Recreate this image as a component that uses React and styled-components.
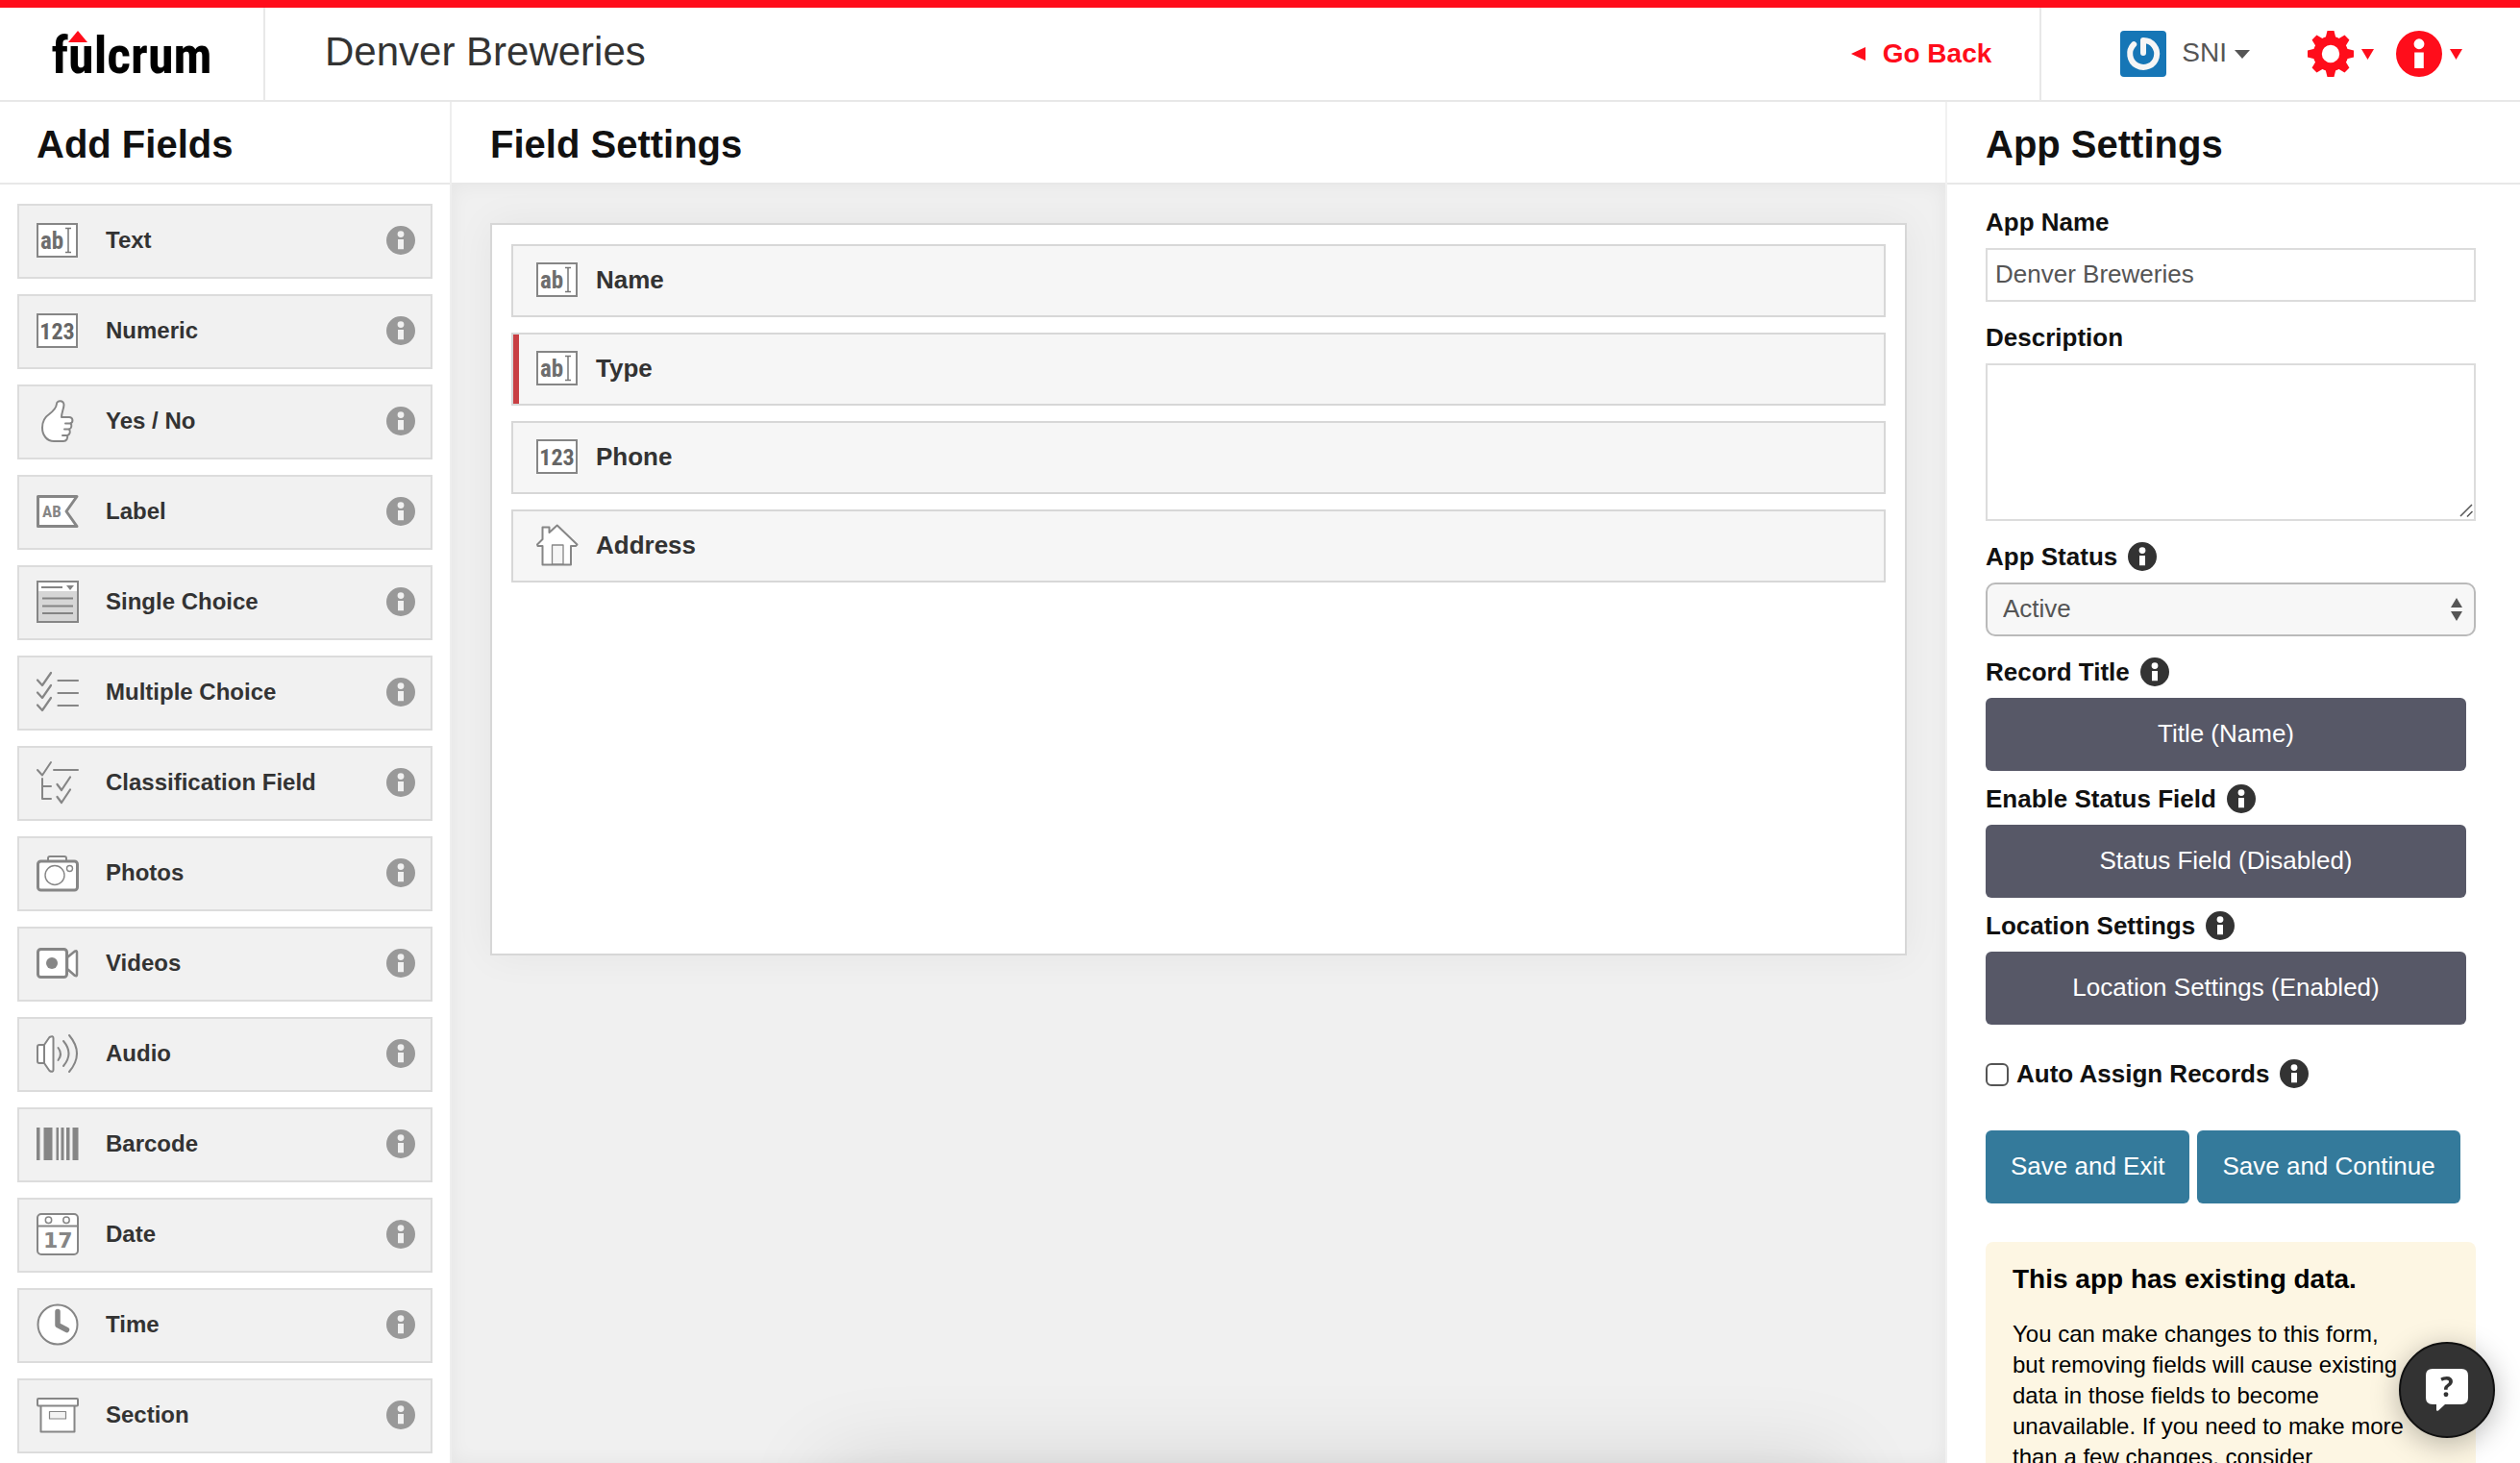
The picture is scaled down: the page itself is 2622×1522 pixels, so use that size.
import React, { useState } from "react";
import styled, { createGlobalStyle } from "styled-components";

const RED = "#ff0d1b";
const LINE = "#e8e8e8";
const ICON = "#868686";
const CONDENSED = '"Roboto Condensed", "Open Sans Condensed", "Noto Sans Condensed", "Liberation Sans Narrow", "Liberation Sans"';

const GlobalStyle = createGlobalStyle`
  *, *::before, *::after { box-sizing: border-box; }
  body {
    margin: 0;
    background: #fff;
    color: #111;
    font-family: "Helvetica Neue", "Liberation Sans", Arial, sans-serif;
    font-size: 26px;
  }
  button, input, select, textarea { font: inherit; }
  button { cursor: pointer; }
  h1, h2, h3, p, ul { margin: 0; padding: 0; }
  ul { list-style: none; }
`;

/* ---------- page frame ---------- */

const Page = styled.div`
  display: flex;
  flex-direction: column;
  height: 100vh;
  overflow: hidden;
`;

const Header = styled.header`
  display: flex;
  flex: none;
  height: 106px;
  border-top: 8px solid ${RED};
  border-bottom: 2px solid ${LINE};
`;

const LogoLink = styled.a`
  display: flex;
  align-items: center;
  justify-content: center;
  width: 276px;
  padding-top: 4px;
  border-right: 2px solid ${LINE};
  color: #000;
  text-decoration: none;
`;

const Wordmark = styled.span`
  position: relative;
  font-family: ${CONDENSED}, sans-serif;
  font-size: 54px;
  font-weight: 700;
  line-height: 60px;
`;

const Fulcrum = styled.svg`
  position: absolute;
  top: 4px;
  left: 18px;
  width: 20px;
  height: 12px;
`;

const PageTitle = styled.h1`
  flex: 1;
  padding: 0 62px 4px;
  align-self: center;
  color: #333;
  font-size: 42px;
  font-weight: 400;
  line-height: 48px;
`;

const BackLink = styled.a`
  display: flex;
  align-items: center;
  gap: 18px;
  padding-right: 50px;
  border-right: 2px solid ${LINE};
  color: ${RED};
  font-size: 28px;
  font-weight: 700;
  text-decoration: none;
`;

const UserNav = styled.nav`
  display: flex;
  align-items: center;
  padding: 0 60px 0 82px;
`;

const NavButton = styled.button`
  display: flex;
  align-items: center;
  gap: 8px;
  padding: 0;
  margin-left: ${(p) => p.$before || 0}px;
  border: 0;
  background: none;
  color: ${(p) => p.$color || RED};
  font-size: 28px;
`;

const UserName = styled.span`
  padding: 0 0 2px 8px;
`;

const Columns = styled.div`
  display: flex;
  flex: 1;
  min-height: 0;
`;

const Column = styled.section`
  display: flex;
  flex-direction: column;
  flex: none;
  width: ${(p) => p.$width};
  min-height: 0;
`;

const Palette = styled(Column)`
  border-right: 2px solid #eee;
`;

const Center = styled(Column)`
  flex: 1;
  min-width: 0;
`;

const Settings = styled(Column)`
  border-left: 2px solid #f1f1f1;
`;

const ColumnTitle = styled.h2`
  flex: none;
  height: 86px;
  padding: 2px ${(p) => p.$inset || 40}px 0;
  border-bottom: 2px solid ${LINE};
  font-size: 40px;
  line-height: 84px;
`;

/* ---------- field palette ---------- */

const PaletteList = styled.ul`
  display: flex;
  flex-direction: column;
  gap: 16px;
  min-height: 0;
  padding: 20px 18px;
`;

const PaletteItem = styled.li`
  display: flex;
  flex: none;
  height: 78px;
  padding: 0 16px 2px 0;
  border: 2px solid #dcdcdc;
  background: #f1f1f1;
`;

const AddButton = styled.button`
  display: flex;
  flex: 1;
  align-items: center;
  gap: 28px;
  padding: 0 0 0 18px;
  border: 0;
  background: none;
  color: #333;
  font-size: 24px;
  font-weight: 700;
  text-align: left;
`;

const HelpButton = styled.button`
  display: flex;
  align-items: center;
  padding: 0;
  border: 0;
  background: none;
  color: ${(p) => (p.$muted ? "#999" : "#333")};
`;

/* ---------- form canvas ---------- */

const Workspace = styled.div`
  position: relative;
  flex: 1;
  min-height: 0;
  padding: 40px;
  overflow: hidden;
  background: #f0f0f0;
  box-shadow: inset 0 0 20px rgba(0, 0, 0, 0.05);

  &::after {
    content: "";
    position: absolute;
    top: 100%;
    left: 25%;
    right: 7%;
    height: 100px;
    box-shadow: 0 0 90px rgba(0, 0, 0, 0.12);
  }
`;

const FormCard = styled.ul`
  display: flex;
  flex-direction: column;
  gap: 16px;
  min-height: 762px;
  padding: 20px;
  border: 2px solid #d7d7d7;
  background: #fff;
  box-shadow: 0 0 40px rgba(0, 0, 0, 0.05);
`;

const FormRow = styled.li`
  display: flex;
  align-items: center;
  gap: 18px;
  height: 76px;
  padding: 0 24px 2px;
  border: 2px solid #d7d7d7;
  background: #f6f6f6;
  box-shadow: ${(p) => (p.$required ? "inset 6px 0 0 #c83f43" : "none")};
  color: #333;
  font-weight: 700;
`;

/* ---------- app settings ---------- */

const SettingsForm = styled.form`
  padding: 24px 46px 0 40px;
`;

const Field = styled.div`
  margin-bottom: ${(p) => (p.$tight ? 14 : 22)}px;
`;

const LabelRow = styled.div`
  display: flex;
  align-items: center;
  gap: 11px;
  height: 30px;
  margin-bottom: 12px;
  font-weight: 700;
  line-height: 30px;
`;

const TextInput = styled.input`
  display: block;
  width: 100%;
  height: 56px;
  padding: 0 8px 2px;
  border: 2px solid #dcdcdc;
  border-radius: 0;
  background: #fff;
  color: #555;
`;

const ControlWrap = styled.div`
  position: relative;
`;

const TextArea = styled.textarea`
  display: block;
  width: 100%;
  height: 164px;
  padding: 8px;
  border: 2px solid #dcdcdc;
  color: #555;
  resize: none;
`;

const Grip = styled.svg`
  position: absolute;
  right: 3px;
  bottom: 4px;
  width: 14px;
  height: 14px;
  pointer-events: none;
`;

const Select = styled.select`
  display: block;
  width: 100%;
  height: 56px;
  padding: 0 44px 2px 16px;
  border: 2px solid #bababa;
  border-radius: 10px;
  background: #f7f7f7;
  color: #555;
  appearance: none;
`;

const SelectArrows = styled.svg`
  position: absolute;
  top: 16px;
  right: 14px;
  width: 12px;
  height: 24px;
  pointer-events: none;
`;

const Button = styled.button`
  height: 76px;
  padding: 0 26px 2px;
  border: 0;
  border-radius: 6px;
  background: #347a9b;
  color: #fff;
`;

const WideButton = styled(Button)`
  display: block;
  width: calc(100% - 10px);
  background: #575867;
`;

const CheckRow = styled.div`
  display: flex;
  align-items: center;
  height: 30px;
  margin: 36px 0 44px;
  font-weight: 700;
`;

const CheckBox = styled.input`
  width: 24px;
  height: 24px;
  margin: 2px 8px 0 0;
  border: 2px solid #555;
  border-radius: 6px;
  background: #fff;
  appearance: none;

  &:checked { background: #347a9b; }
`;

const CheckLabel = styled.label`
  margin-right: 11px;
`;

const Actions = styled.div`
  display: flex;
  gap: 8px;
  margin-bottom: 40px;
`;

const Notice = styled.aside`
  padding: 16px 70px 16px 28px;
  border-radius: 8px;
  background: #fdf6e3;
  color: #000;
`;

const NoticeTitle = styled.h3`
  margin-bottom: 18px;
  font-size: 28px;
  line-height: 46px;
`;

const NoticeText = styled.p`
  font-size: 24px;
  line-height: 32px;
`;

const ChatButton = styled.button`
  position: fixed;
  right: 26px;
  bottom: 26px;
  display: flex;
  align-items: center;
  justify-content: center;
  width: 100px;
  height: 100px;
  padding: 0;
  border: 2px solid #111;
  border-radius: 50%;
  background: #333;
  box-shadow: 0 6px 30px rgba(0, 0, 0, 0.28);
`;

/* ---------- drawings ---------- */

const IconSvg = styled.svg`
  display: block;
  flex: none;
  width: 44px;
  height: 44px;
  overflow: visible;
`;

const Glyphs = styled.text`
  font-family: ${(p) => p.$face || CONDENSED}, sans-serif;
  font-size: ${(p) => p.$size}px;
  font-weight: 700;
`;

const Box = () => <rect x="1" y="5" width="41" height="34" fill="#fff" stroke={ICON} strokeWidth="2" />;

const art = {
  text: (
    <>
      <Box />
      <Glyphs x="4" y="31" $size={25} fill="#6e6e6e">ab</Glyphs>
      <path d="M30 9.500h6M30 34.500h6M33 9.500v25" fill="none" stroke="#777" strokeWidth="1.500" />
    </>
  ),
  numeric: (
    <>
      <Box />
      <Glyphs x="21.500" y="31" textAnchor="middle" $size={24} fill="#666">123</Glyphs>
    </>
  ),
  yesno: (
    <g fill="#fff" stroke={ICON} strokeWidth="2" strokeLinejoin="round" strokeLinecap="round">
      <path d="M21 4C21 .5 28 0 28.500 5C28.500 9 26 13 26 18H34C38 18 38.500 23 35.500 24.500C37 26 36.500 30 34 30.500C35.500 33 35 36 32 37C33 40 31 43 28 43H18C11 43 6 37 6 29C6 21 10 17 13 15C17 12 20.500 9 21 4Z" />
      <path d="M30 24.500h5.500M29 30.500h5M27 37h5" />
    </g>
  ),
  label: (
    <>
      <path d="M1.500 6.500H42L31 22L42 37.500H1.500Z" fill="#fff" stroke={ICON} strokeWidth="3" strokeLinejoin="round" />
      <Glyphs x="6" y="28" $size={17} fill={ICON}>AB</Glyphs>
    </>
  ),
  single: (
    <>
      <rect x="1" y="1" width="42" height="42" fill="#d6d6d6" stroke={ICON} strokeWidth="2" />
      <path d="M2 2h40v9H2z" fill="#fff" />
      <path d="M5 7h22M6 18.500h32M6 26.500h32M6 34h32" stroke="#848484" strokeWidth="2" />
      <path d="M31 5h8l-4 5z" fill="#848484" />
    </>
  ),
  multiple: (
    <g fill="none" stroke={ICON} strokeWidth="2.200" strokeLinecap="round" strokeLinejoin="round">
      {[0, 13, 26].map((y) => (
        <path key={y} d={`M1 ${y + 9.5}L6 ${y + 15}L15 ${y + 2}M22.500 ${y + 10}H43`} />
      ))}
    </g>
  ),
  classification: (
    <g fill="none" stroke={ICON} strokeWidth="2.200" strokeLinecap="round" strokeLinejoin="round">
      <path d="M1 9L6 14.500L15 1M18 9H43M6 18V39H15M6 26H15" strokeWidth="2" />
      <path d="M21.500 24L26 30L35 16.500M21.500 37L26 43L35 29.500" />
    </g>
  ),
  photos: (
    <g fill="#fff" stroke={ICON} strokeWidth="2">
      <path d="M12 11V7q0-2 2-2h15q2 0 2 2v4" />
      <rect x="1.500" y="10" width="41" height="30" rx="3" strokeWidth="3" />
      <circle cx="19" cy="24.500" r="10" strokeWidth="1.400" />
      <circle cx="34.500" cy="17.500" r="3" strokeWidth="1.400" />
    </g>
  ),
  videos: (
    <g fill="#fff" stroke={ICON} strokeWidth="2.500" strokeLinejoin="round">
      <path d="M32 16L40 9.500q2-1 2 1V34q0 2-2 1L32 28Z" />
      <rect x="1.500" y="7.500" width="30" height="29" rx="3" strokeWidth="3" />
      <circle cx="16" cy="22" r="6" fill={ICON} stroke="none" />
    </g>
  ),
  audio: (
    <g fill="#fff" stroke={ICON} strokeWidth="2" strokeLinejoin="round" strokeLinecap="round">
      <path d="M8 13H3q-2 0-2 2v15q0 2 2 2h5z" />
      <path d="M8 13L13.500 5q4-2 4 1v33q0 3-4 1L8 32Z" />
      <path d="M22.500 16q5 6.500 0 13M28 9q11 13 0 26M34 3q16 19 0 38" fill="none" />
    </g>
  ),
  barcode: (
    <path d="M0 5h3.500v34H0zM7.500 5h9v34h-9zM20.500 5H23v34h-2.500zM25.500 5h3v34h-3zM31 5h3.500v34H31zM37.500 5h6v34h-6z" fill={ICON} />
  ),
  date: (
    <g fill="#fff" stroke={ICON} strokeWidth="2">
      <rect x="1" y="1" width="42" height="42" rx="4" />
      <path d="M1 13.500h42" />
      <circle cx="12.500" cy="7.300" r="3.200" strokeWidth="1.500" />
      <circle cx="31" cy="7.300" r="3.200" strokeWidth="1.500" />
      <Glyphs x="7" y="36" $size={22} $face={'"DejaVu Sans"'} fill={ICON} stroke="none">17</Glyphs>
    </g>
  ),
  time: (
    <g fill="#fff" stroke={ICON} strokeLinecap="round" strokeLinejoin="round">
      <circle cx="22" cy="22" r="20.500" strokeWidth="2" />
      <path d="M22 8.500V22.500L31.500 27.500" fill="none" strokeWidth="5.500" />
    </g>
  ),
  section: (
    <g fill="#fff" stroke={ICON} strokeWidth="2" strokeLinejoin="round">
      <rect x="4.500" y="12" width="35" height="27.500" />
      <rect x="1" y="5" width="42" height="7.500" rx="1" />
      <rect x="13.500" y="18.500" width="17" height="7.500" fill="#f3f3f3" strokeWidth="1.200" />
    </g>
  ),
  address: (
    <g fill="#fff" stroke={ICON} strokeWidth="2" strokeLinejoin="round">
      <path d="M21.700 1.500L42.500 21.500L41 23H36V42.500H6.500V23H1.500L1 21.500L6.500 16V3.500H13.500V9Z" />
      <rect x="16.500" y="22" width="11.500" height="20" fill="#f6f6f6" strokeWidth="1.300" />
    </g>
  ),
};

const FieldIcon = ({ type }) => <IconSvg viewBox="0 0 44 44" aria-hidden="true">{art[type]}</IconSvg>;

const InfoGlyph = ({ size = 30 }) => (
  <svg width={size} height={size} viewBox="0 0 30 30" aria-hidden="true">
    <path
      fill="currentColor"
      fillRule="evenodd"
      d="M15 0a15 15 0 1 1 0 30a15 15 0 1 1 0-30zM15 5.200a3.400 3.400 0 1 0 0 6.800a3.400 3.400 0 1 0 0-6.800zM12 14h6v10.300h-6z"
    />
  </svg>
);

const Caret = ({ w = 13, h = 11 }) => (
  <svg width={w} height={h} viewBox="0 0 10 10" preserveAspectRatio="none" aria-hidden="true">
    <path d="M0 0h10L5 10z" fill="currentColor" />
  </svg>
);

const Gear = () => (
  <svg width="48" height="48" viewBox="0 0 48 48" aria-hidden="true">
    <circle cx="24" cy="24" r="13.700" fill="none" stroke="currentColor" strokeWidth="9" />
    {[0, 45, 90, 135, 180, 225, 270, 315].map((a) => (
      <path key={a} d="M18.500 8L20.500 0h7L29.500 8z" fill="currentColor" transform={`rotate(${a} 24 24)`} />
    ))}
  </svg>
);

const Avatar = () => (
  <svg width="48" height="48" viewBox="0 0 48 48" aria-hidden="true">
    <rect width="48" height="48" rx="4" fill="#1676b6" />
    <path d="M14.200 14.200A14 14 0 1 0 24 10V23" fill="none" stroke="#f6f6f6" strokeWidth="6" strokeLinecap="round" strokeLinejoin="round" />
  </svg>
);

/* ---------- data ---------- */

const paletteFields = [
  ["text", "Text"],
  ["numeric", "Numeric"],
  ["yesno", "Yes / No"],
  ["label", "Label"],
  ["single", "Single Choice"],
  ["multiple", "Multiple Choice"],
  ["classification", "Classification Field"],
  ["photos", "Photos"],
  ["videos", "Videos"],
  ["audio", "Audio"],
  ["barcode", "Barcode"],
  ["date", "Date"],
  ["time", "Time"],
  ["section", "Section"],
];

const formFields = [
  { type: "text", name: "Name" },
  { type: "text", name: "Type", required: true },
  { type: "numeric", name: "Phone" },
  { type: "address", name: "Address" },
];

const Help = ({ topic, muted }) => (
  <HelpButton type="button" $muted={muted} aria-label={`About ${topic}`}>
    <InfoGlyph />
  </HelpButton>
);

export default function App() {
  const [name, setName] = useState("Denver Breweries");
  const [description, setDescription] = useState("");
  const [autoAssign, setAutoAssign] = useState(false);

  return (
    <Page>
      <GlobalStyle />
      <Header>
        <LogoLink href="#home">
          <Wordmark>
            fulcrum
            <Fulcrum viewBox="0 0 20 12" aria-hidden="true">
              <path d="M10 0L20 12H0z" fill={RED} />
            </Fulcrum>
          </Wordmark>
        </LogoLink>
        <PageTitle>Denver Breweries</PageTitle>
        <BackLink href="#apps">
          <svg width="15" height="14" viewBox="0 0 15 14" aria-hidden="true">
            <path d="M15 0v14L0 7z" fill="currentColor" />
          </svg>
          Go Back
        </BackLink>
        <UserNav>
          <NavButton type="button" $color="#555">
            <Avatar />
            <UserName>SNI</UserName>
            <Caret w={16} h={9} />
          </NavButton>
          <NavButton type="button" $before={60} aria-label="Settings">
            <Gear />
            <Caret />
          </NavButton>
          <NavButton type="button" $before={23} aria-label="Help">
            <InfoGlyph size={48} />
            <Caret />
          </NavButton>
        </UserNav>
      </Header>

      <Columns>
        <Palette $width="470px">
          <ColumnTitle $inset={38}>Add Fields</ColumnTitle>
          <PaletteList>
            {paletteFields.map(([type, label]) => (
              <PaletteItem key={type}>
                <AddButton type="button">
                  <FieldIcon type={type} />
                  {label}
                </AddButton>
                <Help topic={label} muted />
              </PaletteItem>
            ))}
          </PaletteList>
        </Palette>

        <Center $width="auto">
          <ColumnTitle>Field Settings</ColumnTitle>
          <Workspace>
            <FormCard>
              {formFields.map((field) => (
                <FormRow key={field.name} $required={field.required}>
                  <FieldIcon type={field.type} />
                  {field.name}
                </FormRow>
              ))}
            </FormCard>
          </Workspace>
        </Center>

        <Settings $width="598px">
          <ColumnTitle>App Settings</ColumnTitle>
          <SettingsForm onSubmit={(e) => e.preventDefault()}>
            <Field>
              <LabelRow><label htmlFor="app-name">App Name</label></LabelRow>
              <TextInput id="app-name" value={name} onChange={(e) => setName(e.target.value)} />
            </Field>
            <Field>
              <LabelRow><label htmlFor="description">Description</label></LabelRow>
              <ControlWrap>
                <TextArea id="description" value={description} onChange={(e) => setDescription(e.target.value)} />
                <Grip viewBox="0 0 14 14" aria-hidden="true">
                  <path d="M1 13L13 1M8 13.500L13.500 8" stroke="#555" strokeWidth="1.500" />
                </Grip>
              </ControlWrap>
            </Field>
            <Field>
              <LabelRow>
                <label htmlFor="app-status">App Status</label>
                <Help topic="App Status" />
              </LabelRow>
              <ControlWrap>
                <Select id="app-status" defaultValue="Active">
                  <option>Active</option>
                </Select>
                <SelectArrows viewBox="0 0 12 24" aria-hidden="true">
                  <path d="M6 0l6 10H0zM6 24l6-10H0z" fill="#555" />
                </SelectArrows>
              </ControlWrap>
            </Field>
            <Field $tight>
              <LabelRow>
                <label htmlFor="record-title">Record Title</label>
                <Help topic="Record Title" />
              </LabelRow>
              <WideButton id="record-title" type="button">Title (Name)</WideButton>
            </Field>
            <Field $tight>
              <LabelRow>
                <label htmlFor="status-field">Enable Status Field</label>
                <Help topic="Enable Status Field" />
              </LabelRow>
              <WideButton id="status-field" type="button">Status Field (Disabled)</WideButton>
            </Field>
            <Field $tight>
              <LabelRow>
                <label htmlFor="location">Location Settings</label>
                <Help topic="Location Settings" />
              </LabelRow>
              <WideButton id="location" type="button">Location Settings (Enabled)</WideButton>
            </Field>
            <CheckRow>
              <CheckBox
                id="auto-assign"
                type="checkbox"
                checked={autoAssign}
                onChange={(e) => setAutoAssign(e.target.checked)}
              />
              <CheckLabel htmlFor="auto-assign">Auto Assign Records</CheckLabel>
              <Help topic="Auto Assign Records" />
            </CheckRow>
            <Actions>
              <Button type="submit">Save and Exit</Button>
              <Button type="button">Save and Continue</Button>
            </Actions>
            <Notice>
              <NoticeTitle>This app has existing data.</NoticeTitle>
              <NoticeText>
                You can make changes to this form, but removing fields will cause existing data in those
                fields to become unavailable. If you need to make more than a few changes, consider
              </NoticeText>
            </Notice>
          </SettingsForm>
        </Settings>
      </Columns>

      <ChatButton type="button" aria-label="Open help chat">
        <svg width="44" height="44" viewBox="0 0 44 44" aria-hidden="true">
          <path d="M7 0h30q7 0 7 7v23q0 7-7 7H20l-7 6.500q-2 1-2-1V37H7q-7 0-7-7V7q0-7 7-7z" fill="#fff" />
          <Glyphs x="22" y="29" textAnchor="middle" $size={28} $face={'"Open Sans"'} fill="#333">?</Glyphs>
        </svg>
      </ChatButton>
    </Page>
  );
}
